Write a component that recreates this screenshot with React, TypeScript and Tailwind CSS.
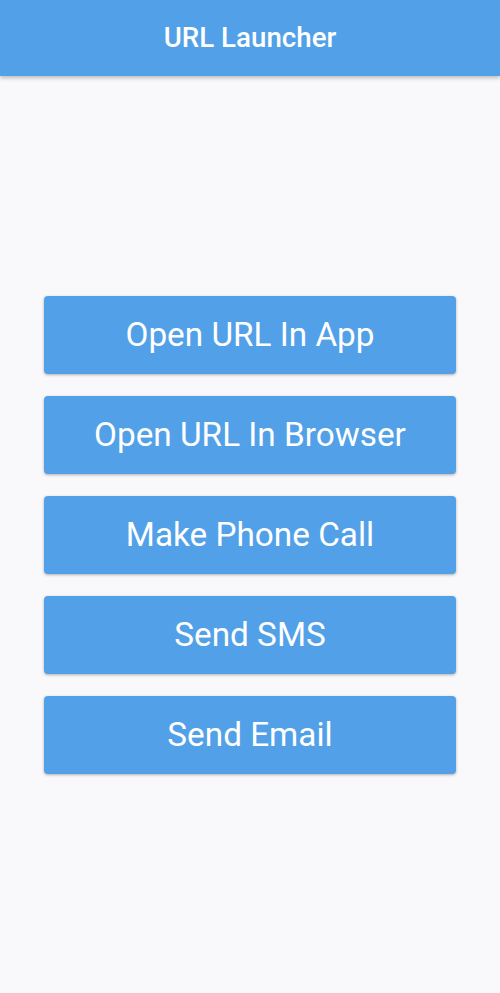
import React from "react";

const items = ["Open URL In App", "Open URL In Browser", "Make Phone Call", "Send SMS", "Send Email"];

export default function App() {
  return (
    <div className="flex h-[993px] w-[500px] flex-col bg-[#f9f8fb]" style={{ fontFamily: "Roboto, 'Noto Sans', sans-serif" }}>
      <header className="relative z-10 flex h-[76px] shrink-0 items-center justify-center bg-[#52a1e8] shadow-[0_2px_4px_rgba(0,0,0,0.25)]">
        <h1 className="text-[27.7px] font-medium text-white">URL Launcher</h1>
      </header>
      <main className="flex flex-1 flex-col items-center justify-center gap-[22px] px-[44px]">
        {items.map((t) => (
          <button
            key={t}
            className="flex h-[78px] w-full items-center justify-center rounded-[4px] bg-[#52a1e8] text-[33.3px] text-white shadow-[0_1px_3px_rgba(0,0,0,0.3)]"
          >
            {t}
          </button>
        ))}
      </main>
    </div>
  );
}
